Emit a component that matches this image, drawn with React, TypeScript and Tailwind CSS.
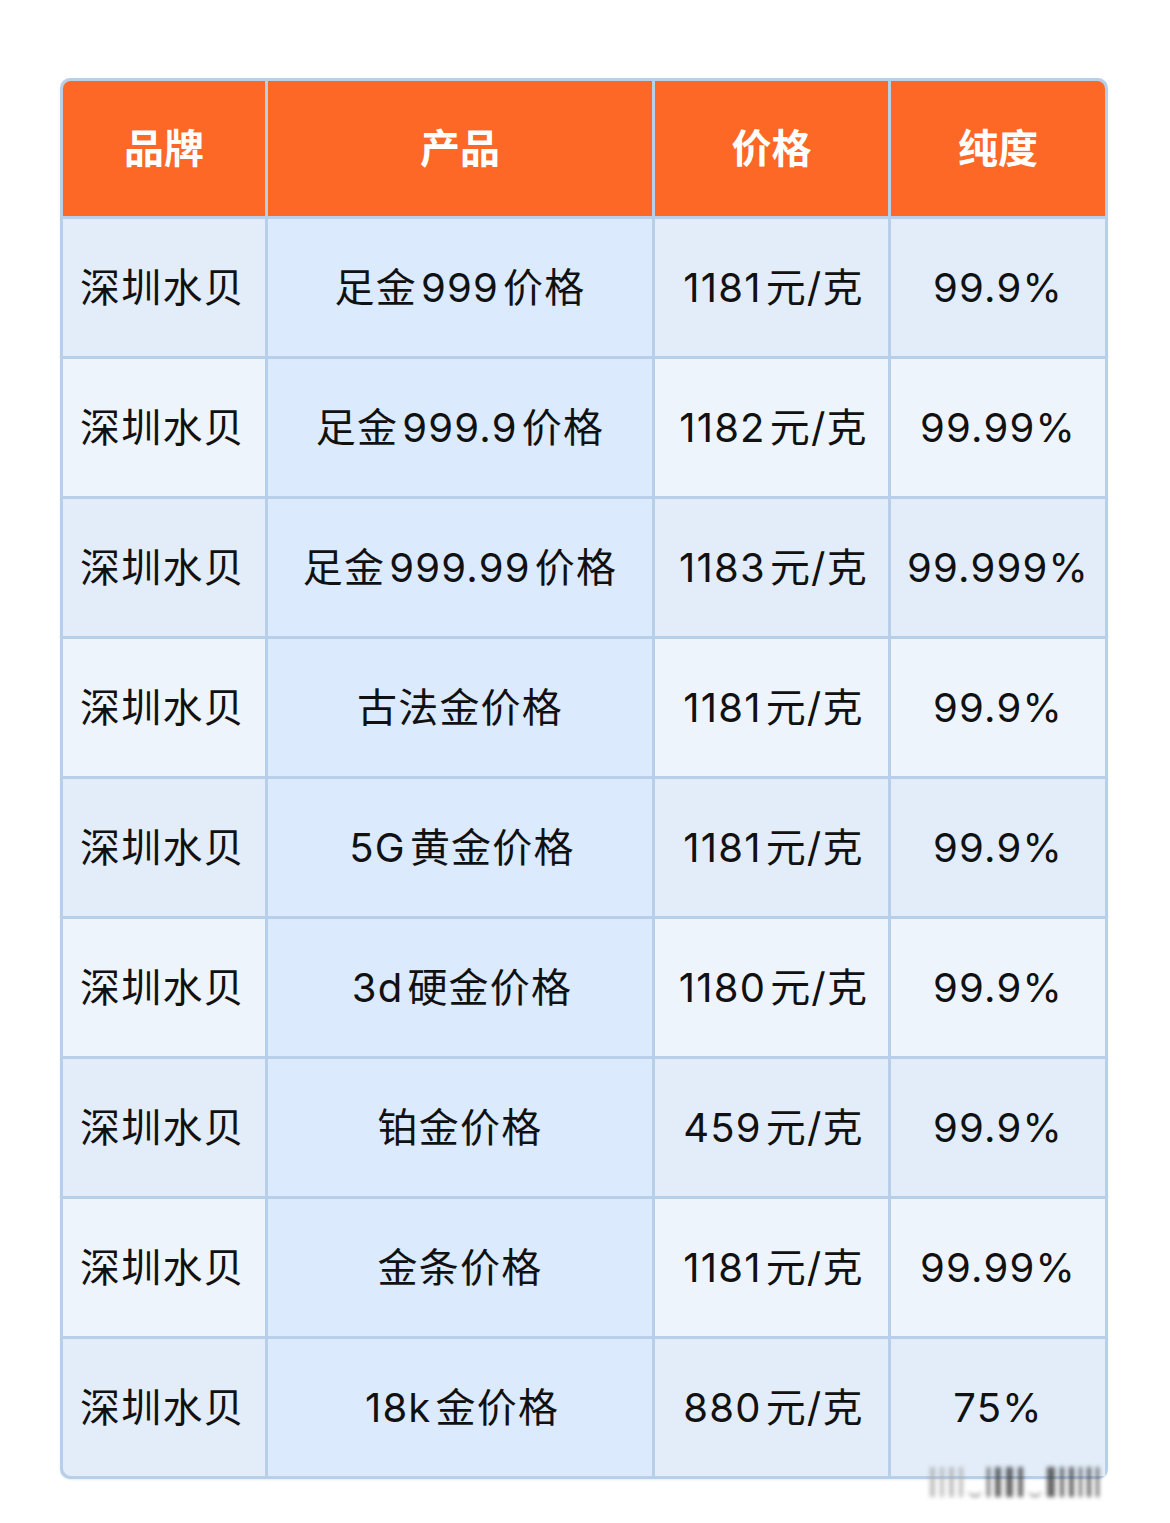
const rows = [
  ['深圳水贝', '足金999价格', '1181元/克', '99.9%'],
  ['深圳水贝', '足金999.9价格', '1182元/克', '99.99%'],
  ['深圳水贝', '足金999.99价格', '1183元/克', '99.999%'],
  ['深圳水贝', '古法金价格', '1181元/克', '99.9%'],
  ['深圳水贝', '5G黄金价格', '1181元/克', '99.9%'],
  ['深圳水贝', '3d硬金价格', '1180元/克', '99.9%'],
  ['深圳水贝', '铂金价格', '459元/克', '99.9%'],
  ['深圳水贝', '金条价格', '1181元/克', '99.99%'],
  ['深圳水贝', '18k金价格', '880元/克', '75%'],
];

const headers = ['品牌', '产品', '价格', '纯度'];

// bar widths for the blurred watermark at the bottom
const bars = [5, 4, 5, 4, 0, 3, 6, 7, 5, 0, 8, 4, 5, 3, 4, 3];

// split text into han / latin runs so a small gap sits between them
function Spaced({ text }: { text: string }) {
  const parts = text.match(/[\u4e00-\u9fff]+|[^\u4e00-\u9fff]+/g) || [];
  return (
    <span>
      {parts.map((p, i) => {
        const latin = !/[\u4e00-\u9fff]/.test(p) && p !== '/';
        return (
          <span key={i} className={latin && /[0-9a-zA-Z]/.test(p) ? 'mx-[4px]' : ''}>
            {p}
          </span>
        );
      })}
    </span>
  );
}

export default function App() {
  return (
    <div
      className="w-[1170px] h-[1523px] bg-white pt-[78px] pl-[60px] relative"
      style={{ fontFamily: 'Inter, "Noto Sans CJK SC", sans-serif' }}
    >
      <div className="w-[1048px] bg-[#b7cfe8] p-[3px] rounded-[10px] grid grid-cols-[202px_384px_233px_214px] gap-[3px] overflow-hidden shadow-[0_1px_2px_rgba(0,0,0,0.08)]">
        {headers.map((h, i) => (
          <div
            key={h}
            className={`h-[135px] bg-[#fd6826] flex items-center justify-center text-white font-bold text-[40px] ${i === 0 ? 'rounded-tl-[8px]' : ''} ${i === 3 ? 'rounded-tr-[8px]' : ''}`}
          >
            {h}
          </div>
        ))}
        {rows.map((r, ri) =>
          r.map((c, ci) => (
            <div
              key={ri + '-' + ci}
              className={`h-[137px] flex items-center text-[40px] text-[#111] tracking-[1.2px] whitespace-nowrap ${
                ci === 1 ? 'bg-[#dbeafc]' : ri % 2 === 0 ? 'bg-[#e3edf9]' : 'bg-[#eef4fc]'
              } ${ci === 0 ? 'justify-start pl-[17px]' : 'justify-center'} ${
                ri === 8 && ci === 0 ? 'rounded-bl-[8px]' : ''
              }`}
            >
              <Spaced text={c} />
            </div>
          ))
        )}
      </div>

      {/* blurred watermark */}
      <div className="absolute left-[930px] top-[1463px] h-[34px] flex items-end gap-[5px] blur-[2px] opacity-75">
        {bars.map((w, i) =>
          w === 0 ? (
            <div key={i} className="w-[14px] h-[10px] border-b-2 border-[#555] rounded-b-full" />
          ) : (
            <div
              key={i}
              className={`h-[30px] ${i < 4 ? 'bg-[#aaa]' : 'bg-[#333]'}`}
              style={{ width: w }}
            />
          )
        )}
      </div>
    </div>
  );
}
